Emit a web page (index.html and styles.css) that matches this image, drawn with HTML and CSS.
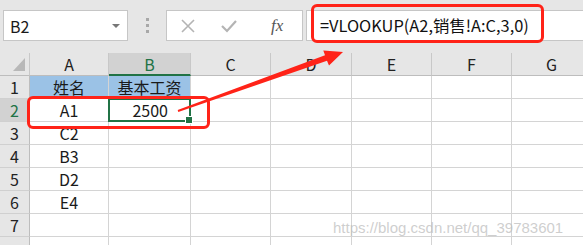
FILE: index.html
```html
<!DOCTYPE html>
<html lang="zh-CN">
<head>
    <meta charset="UTF-8">
    <title>VLOOKUP</title>
    <link rel="stylesheet" href="styles.css">
</head>
<body>
    <div class="toolbar">
        <div class="name-box">
            <span>B2</span>
            <span class="caret"></span>
        </div>
        <div class="grip"><i></i><i></i><i></i></div>
        <div class="fx-box">
            <svg class="icon" viewBox="0 0 14 14" width="14" height="14">
                <path d="M1 1L13 13M13 1L1 13" stroke="#b4b4b4" stroke-width="1.6" fill="none"/>
            </svg>
            <svg class="icon" viewBox="0 0 16 14" width="16" height="14">
                <path d="M1 7l5 5L15 2" stroke="#b4b4b4" stroke-width="2.2" fill="none"/>
            </svg>
            <span class="fx">fx</span>
        </div>
        <div class="formula">=VLOOKUP(A2,销售!A:C,3,0)</div>
    </div>

    <div class="sheet">
        <div class="hd corner"><span class="tri"></span></div>
        <div class="hd">A</div>
        <div class="hd active-col">B</div>
        <div class="hd">C</div>
        <div class="hd">D</div>
        <div class="hd">E</div>
        <div class="hd">F</div>
        <div class="hd">G</div>

        <div class="rh">1</div>
        <div class="c title">姓名</div>
        <div class="c title">基本工资</div>
        <div class="c"></div><div class="c"></div><div class="c"></div><div class="c"></div><div class="c"></div>

        <div class="rh active-row">2</div>
        <div class="c">A1</div>
        <div class="c num selected">2500<span class="handle"></span></div>
        <div class="c"></div><div class="c"></div><div class="c"></div><div class="c"></div><div class="c"></div>

        <div class="rh">3</div>
        <div class="c">C2</div>
        <div class="c"></div><div class="c"></div><div class="c"></div><div class="c"></div><div class="c"></div><div class="c"></div>

        <div class="rh">4</div>
        <div class="c">B3</div>
        <div class="c"></div><div class="c"></div><div class="c"></div><div class="c"></div><div class="c"></div><div class="c"></div>

        <div class="rh">5</div>
        <div class="c">D2</div>
        <div class="c"></div><div class="c"></div><div class="c"></div><div class="c"></div><div class="c"></div><div class="c"></div>

        <div class="rh">6</div>
        <div class="c">E4</div>
        <div class="c"></div><div class="c"></div><div class="c"></div><div class="c"></div><div class="c"></div><div class="c"></div>

        <div class="rh">7</div>
        <div class="c"></div><div class="c"></div><div class="c"></div><div class="c"></div><div class="c"></div><div class="c"></div><div class="c"></div>

        <div class="rh"></div>
        <div class="c"></div><div class="c"></div><div class="c"></div><div class="c"></div><div class="c"></div><div class="c"></div><div class="c"></div>
    </div>

    <!-- annotations drawn over the screenshot -->
    <div class="mark mark-formula"></div>
    <div class="mark mark-row"></div>
    <svg class="arrow" width="583" height="245" viewBox="0 0 583 245">
        <polygon points="177.7,110 325,55.2 323.3,50.5 343,52 329,65.5 327,60.8 178.3,112" fill="#ff2318"/>
    </svg>
    <div class="watermark">https://blog.csdn.net/qq_39783601</div>
</body>
</html>
```

FILE: styles.css
```css
body {
    margin: 0;
    width: 583px;
    height: 245px;
    overflow: hidden;
    background-color: #e6e6e6;
    font-family: "Noto Sans CJK SC", "Liberation Sans", sans-serif;
    color: #1a1a1a;
    position: relative;
}

.toolbar {
    display: flex;
    align-items: center;
    height: 31px;
    padding: 10px 0 12px 3px;
}

.name-box {
    width: 125px;
    height: 31px;
    box-sizing: border-box;
    background-color: #fff;
    border: 1px solid #c6c6c6;
    display: flex;
    align-items: center;
    justify-content: space-between;
    padding: 0 7px 0 6px;
    font-size: 16px;
}

.caret {
    width: 0;
    height: 0;
    border-left: 4px solid transparent;
    border-right: 4px solid transparent;
    border-top: 4px solid #777;
}

.grip {
    width: 38px;
    display: flex;
    flex-direction: column;
    align-items: center;
    gap: 3px;
}

.grip i {
    width: 3px;
    height: 3px;
    background-color: #a8a8a8;
}

.fx-box {
    width: 137px;
    height: 31px;
    box-sizing: border-box;
    background-color: #fff;
    border: 1px solid #c6c6c6;
    display: flex;
    align-items: center;
    padding-left: 14px;
    gap: 26px;
}

.fx {
    font-family: "Liberation Serif", serif;
    font-style: italic;
    font-size: 17px;
    color: #555;
    margin-left: 8px;
}

.formula {
    flex: 1;
    height: 31px;
    box-sizing: border-box;
    margin-left: 3px;
    background-color: #fff;
    border: 1px solid #c6c6c6;
    border-right: none;
    padding-left: 13px;
    font-size: 16.4px;
    line-height: 29px;
    color: #111;
}

.sheet {
    display: grid;
    grid-template-columns: 30px 79px 82px 80px 81px 80px 80px 80px;
    grid-auto-rows: 23px;
    width: 612px;
    font-size: 16px;
}

.sheet > div {
    box-sizing: border-box;
    display: flex;
    align-items: center;
    justify-content: center;
}

.hd {
    background-color: #e6e6e6;
    border-right: 1px solid #c8c8c8;
    border-bottom: 1px solid #bdbdbd;
    color: #222;
}

.corner {
    position: relative;
}

.tri {
    position: absolute;
    right: 4px;
    bottom: 4px;
    width: 0;
    height: 0;
    border-left: 12px solid transparent;
    border-bottom: 13px solid #b8b8b8;
}

.active-col {
    background-color: #d2d2d2;
    color: #217346;
    border-bottom: 2px solid #217346;
}

.rh {
    background-color: #e6e6e6;
    border-right: 1px solid #bdbdbd;
    border-bottom: 1px solid #d0d0d0;
    color: #222;
}

.active-row {
    background-color: #d2d2d2;
    color: #217346;
}

.c {
    background-color: #fff;
    border-right: 1px solid #d4d4d4;
    border-bottom: 1px solid #d4d4d4;
}

.c.title {
    background-color: #9bc2e6;
}

.c.num {
    justify-content: flex-end;
    padding-right: 21px;
}

.selected {
    position: relative;
    border: 2px solid #217346;
    margin: -1px 0 0 -1px;
}

.handle {
    position: absolute;
    right: -4px;
    bottom: -4px;
    width: 6px;
    height: 6px;
    background-color: #217346;
    border: 1px solid #fff;
}

.mark {
    position: absolute;
    border: 3px solid #ff2318;
    border-radius: 6px;
    box-sizing: border-box;
}

.mark-formula {
    left: 311px;
    top: 4px;
    width: 233px;
    height: 39px;
}

.mark-row {
    left: 27px;
    top: 96px;
    width: 183px;
    height: 33px;
}

.arrow {
    position: absolute;
    left: 0;
    top: 0;
}

.watermark {
    position: absolute;
    left: 333px;
    top: 219px;
    font-family: "Liberation Sans", sans-serif;
    font-size: 15px;
    color: rgba(190, 190, 190, 0.75);
}
```
